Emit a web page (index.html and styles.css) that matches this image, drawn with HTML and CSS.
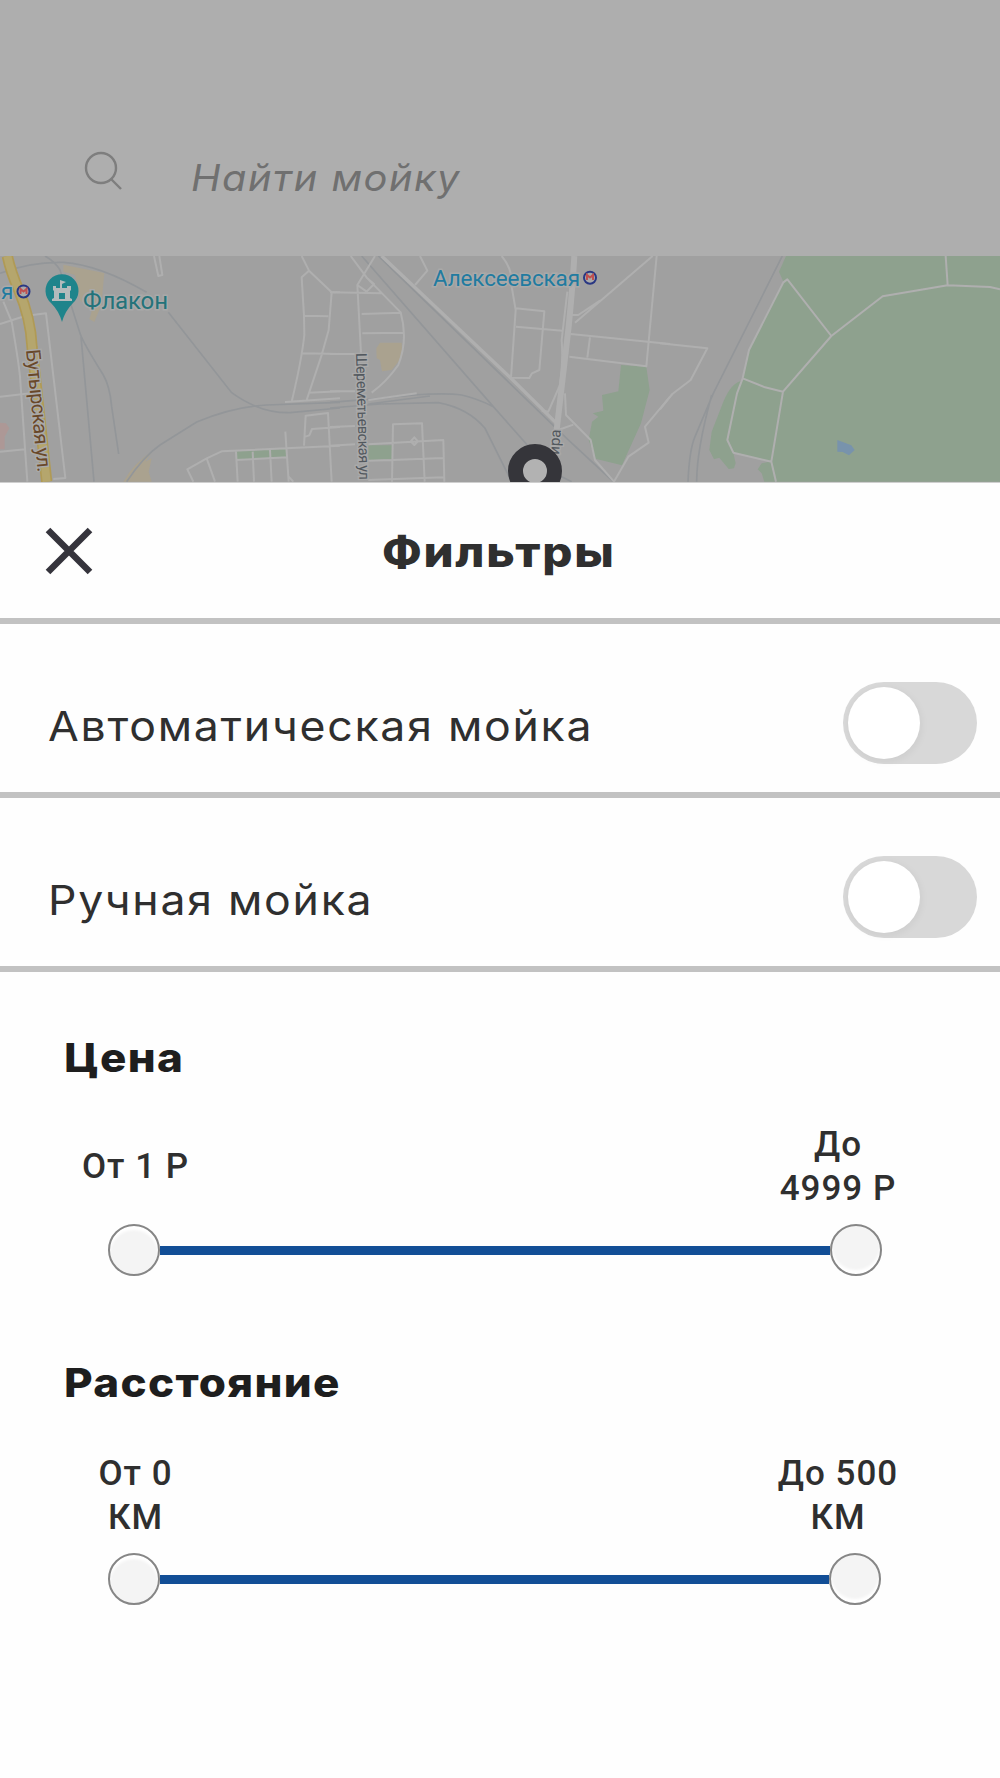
FILE: index.html
```html
<!DOCTYPE html>
<html lang="ru">
<head>
    <meta charset="UTF-8">
    <meta name="viewport" content="width=device-width, initial-scale=1.0">
    <title>Фильтры</title>
    <link rel="stylesheet" href="styles.css">
</head>

<body>
    <!-- Поиск -->
    <div class="search">
        <svg class="search-icon" width="40" height="40" viewBox="0 0 40 40">
            <circle cx="17" cy="17" r="15" />
            <path d="M27 28l10 10" />
        </svg>
        <span class="search-text">Найти мойку</span>
    </div>

    <!-- Карта -->
    <svg class="map" width="1000" height="226" viewBox="0 6 1000 226">
        <!-- левая часть -->
        <g transform="scale(.33333)">
            <path class="sand" d="M190 44L313 69L304 165L283 216L268 207L275 185L240 150L225 75L190 65Z" />
            <path class="sand" d="M370 695Q400 640 458 602L436 635L455 625L446 665L455 695Z" />
            <path class="clinic" d="M0 518L18 520L28 535L14 560L14 598L0 598Z" />
            <path class="park" d="M709 604L858 597V620L709 630Z" />
            <path class="rail" d="M0 70Q90 35 190 37Q300 45 440 127M135 18Q165 35 180 60L240 250Q250 280 310 375Q330 410 335 470L356 612M243 260L282 695M505 187L695 428Q780 490 870 488L1020 474M380 695Q430 620 480 585L590 516Q700 470 800 465L1020 457" />
            <path class="road" d="M10 155L35 215Q55 330 60 380L82 695M0 222L75 198L138 190L196 684L160 687M0 440L92 430M0 605L76 598M462 18L475 78L487 75L478 18M905 18L927 62L995 127H1020M927 62L905 82L912 197L985 199M912 197L913 255Q905 330 875 455M995 127L986 240L965 315L920 450M907 310L1020 312M925 428L1020 424M855 456L1020 445M912 587L917 497L984 489L995 695M916 560L928 556L936 537L1020 531M1020 587L665 604L620 625L562 658L580 695M620 625L645 695M708 605L713 695M758 605L762 695M708 630L862 622M810 600L815 695M856 545L866 695M866 680L880 695" />
            <path class="highway-edge" d="M22 18Q32 65 56 120Q92 205 96 290L140 695" />
            <path class="highway" d="M22 18Q32 65 56 120Q92 205 96 290L140 695" />
        </g>

        <!-- центр -->
        <g transform="translate(330) scale(.33333)">
            <path class="sand" d="M150 278H215L217 320L185 360L156 364L150 330L140 325L139 295Z" />
            <path class="park" d="M115 586H187V627L115 631Z" />
            <path class="park" d="M873 345L949 350L959 420L933 520L876 646L796 626L776 570L786 515L805 500L788 490L820 482L816 435L865 424Z" />
            <path class="rail" d="M95 18L490 470L645 645M145 18L710 565L850 695M0 457L150 445Q320 425 395 435Q440 445 490 470M0 474L150 462L325 458Q415 475 465 535L545 695M115 462L300 438M695 680L725 695" />
            <path class="road" d="M62 18L112 85L212 187Q235 270 205 345Q170 395 125 428M135 18L82 105L93 310M112 85L132 102L110 125L82 105M0 127L155 130M95 192L212 188M97 250L220 248M0 312H93M0 424H75M115 450L260 430M255 105L292 62L270 18M515 18Q550 60 545 110L557 180L543 383L598 384L606 370L628 360L643 184L557 175M558 230L697 242M1020 282L722 252M780 262L772 323M718 320L949 349L980 18M968 18L735 218M810 152L745 195H725M635 482L655 485L690 405Q700 340 695 270L712 125M640 482L675 515M705 430L708 495L782 570L795 630L852 695L895 620L956 578L945 530L1020 440M685 540L730 524M0 531L75 528M0 587L75 583M115 583L340 570L343 695M186 695L189 523L276 520L284 695M186 630L340 624M115 632L186 630M115 690L340 682M242 574L253 562L264 574L253 585Z" />
            <path class="road wide" d="M155 18L540 382L680 520" />
            <path class="road avenue" d="M733 18Q728 110 716 230L680 540" />
        </g>

        <!-- правая часть -->
        <g transform="translate(660) scale(.33333)">
            <path class="park" d="M378 18H1020V695H313L305 670L293 658L305 640L334 634L220 608L227 640L222 655L206 657L178 623L162 628L148 600L155 545L190 455Q215 395 248 392L267 300L370 95L357 65Z" />
            <path class="pond" d="M532 570L574 586L584 600L567 616L548 606L532 605Z" />
            <path class="rail" d="M367 18L160 430L105 560Q88 600 84 695M155 435Q110 600 110 695" />
            <path class="road" d="M0 280L142 295L92 390L37 432L0 478" />
            <path class="road" d="M348 695L334 635L220 608L202 570L231 430L248 385L267 300L370 97L382 88L514 258L668 139L863 106L990 111L1020 118M857 18L863 106M514 258L369 425L334 635M250 386L315 412L369 425" />
        </g>

        <!-- подписи и метки -->
        <g class="metro">
            <circle cx="23.5" cy="41.5" r="6" />
            <path d="M20.500 44v-5l3 2.500 3-2.500v5" />
            <circle cx="590" cy="27.700" r="6" />
            <path d="M587 30v-5l3 2.500 3-2.500v5" />
        </g>
        <text class="label station" x="1" y="49">я</text>
        <text class="label station" x="433" y="35.500" textLength="147">Алексеевская</text>
        <path class="place" d="M62 72Q59 61 51 53A16.500 16.500 0 1 1 73 53Q65 61 62 72Z" />
        <path class="castle" d="M52 51V49L54 48V41L53 40V36H56V38H60V30L66 32L62 34V38H67V36H71V40L70 41V48L72 49V51Z" />
        <rect class="castle-door" x="59" y="43" width="6" height="6" />
        <text class="label venue" x="83" y="58.500" textLength="85">Флакон</text>
        <text class="label street" transform="translate(26 100) rotate(84.500)" textLength="123">Бутырская ул.</text>
        <text class="label lane" transform="translate(356 103) rotate(88.500)" textLength="127">Шереметьевская ул</text>
        <text class="label lane" transform="translate(559 205) rotate(-86)">ира</text>
        <circle class="pin" cx="535" cy="221" r="19.500" />
    </svg>

    <!-- Панель фильтров -->
    <div class="sheet">
        <div class="sheet-header">
            <svg class="close" width="50" height="50" viewBox="0 0 50 50">
                <path d="M4 4L46 46M46 4L4 46" />
            </svg>
            <h1 class="title">Фильтры</h1>
        </div>

        <div class="option">
            <span class="option-name">Автоматическая мойка</span>
            <span class="toggle"></span>
        </div>
        <div class="option">
            <span class="option-name">Ручная мойка</span>
            <span class="toggle"></span>
        </div>

        <div class="range price">
            <h2 class="range-title">Цена</h2>
            <div class="range-labels">
                <span class="from">От 1 Р</span>
                <span class="to">До<br>4999 Р</span>
            </div>
            <div class="slider">
                <span class="thumb"></span>
                <span class="track"></span>
                <span class="thumb"></span>
            </div>
        </div>

        <div class="range distance">
            <h2 class="range-title">Расстояние</h2>
            <div class="range-labels">
                <span class="from">От 0<br>КМ</span>
                <span class="to">До 500<br>КМ</span>
            </div>
            <div class="slider">
                <span class="thumb"></span>
                <span class="track"></span>
                <span class="thumb"></span>
            </div>
        </div>
    </div>
</body>
</html>
```
FILE: styles.css
```css
* {
    box-sizing: border-box;
}

body {
    margin: 0;
    width: 1000px;
    height: 1778px;
    background: #fefefe;
    color: #2f2f2f;
    font-family: Inter, "Open Sans", sans-serif;
    overflow: hidden;
}

/* Поиск */
.search {
    display: flex;
    align-items: flex-start;
    height: 256px;
    padding: 151px 0 0 84px;
    background: #aeaeae;
}

.search-icon {
    fill: none;
    stroke: #7e7e7e;
    stroke-width: 2.4;
}

.search-text {
    margin: 4px 0 0 67px;
    color: #707070;
    font-size: 37px;
    font-style: italic;
    line-height: 46px;
    letter-spacing: 1.4px;
    transform: scaleX(1.075);
    transform-origin: left;
}

/* Карта */
.map {
    display: block;
    background: #a0a0a0;
}

.road {
    fill: none;
    stroke: #afafaf;
    stroke-width: 6;
    stroke-linejoin: round;
}

.road.wide {
    stroke-width: 10;
}

.road.avenue {
    stroke-width: 18;
}

.rail {
    fill: none;
    stroke: #939699;
    stroke-width: 5;
}

.highway-edge,
.highway {
    fill: none;
    stroke: #b09a55;
    stroke-width: 34;
}

.highway {
    stroke: #b5a66d;
    stroke-width: 24;
}

.park {
    fill: #8ea18e;
}

.sand {
    fill: #aaa28f;
}

.clinic {
    fill: #ad9896;
}

.pond {
    fill: #7893ac;
}

.label {
    font-family: Roboto, sans-serif;
    paint-order: stroke;
    stroke: #a9a9a9;
    stroke-width: 3px;
}

.station {
    fill: #217ba0;
    font-size: 22.5px;
}

.venue {
    fill: #24737a;
    font-size: 24px;
}

.street {
    fill: #694829;
    font-size: 20px;
}

.lane {
    fill: #52585e;
    font-size: 15px;
}

.metro {
    fill: #aaa;
    stroke: #293783;
    stroke-width: 2;
}

.metro path {
    fill: none;
    stroke: #c05050;
}

.place {
    fill: #1f848b;
}

.castle {
    fill: #b4bbbc;
}

.castle-door {
    fill: #1f848b;
}

.pin {
    fill: #b2b2b2;
    stroke: #35353a;
    stroke-width: 15;
}

/* Панель фильтров */
.sheet-header {
    display: grid;
    grid-template-columns: 90px 1fr 90px;
    align-items: center;
    height: 142px;
    padding: 0 0 0 44px;
    border-top: 1px solid #cfcfcf;
    border-bottom: 6px solid #c2c2c2;
}

.close {
    fill: none;
    stroke: #35343c;
    stroke-width: 6.5;
}

.title {
    margin: 2px 0 0;
    padding-left: 248px;
    font-size: 42px;
    font-weight: 800;
    line-height: 50px;
    letter-spacing: 1.5px;
    transform: scaleX(1.13);
    transform-origin: 248px center;
}

.option {
    display: flex;
    justify-content: space-between;
    height: 174px;
    padding: 58px 23px 0 48px;
    border-bottom: 6px solid #c2c2c2;
}

.option-name {
    margin-top: 19px;
    font-size: 41px;
    line-height: 50px;
    letter-spacing: 1.6px;
    transform: scaleX(1.088);
    transform-origin: left;
}

.toggle {
    width: 134px;
    height: 82px;
    padding: 5px;
    border-radius: 41px;
    background: #d8d8d8;
}

.toggle::before {
    content: "";
    display: block;
    width: 72px;
    height: 72px;
    border-radius: 50%;
    background: #fff;
    box-shadow: 1px 2px 8px rgba(0, 0, 0, 0.06);
}

.range {
    padding: 61px 100px 0 63px;
}

.distance {
    padding-top: 82px;
}

.range-title {
    margin: 0 0 0 1px;
    height: 50px;
    color: #1e1e1e;
    font-size: 40px;
    font-weight: 800;
    line-height: 50px;
    letter-spacing: 1.2px;
    transform: scaleX(1.1);
    transform-origin: left;
}

.range-labels {
    display: flex;
    align-items: center;
    justify-content: space-between;
    height: 88px;
    margin-top: 40px;
    font-family: Roboto, sans-serif;
    font-size: 35px;
    font-weight: 500;
    line-height: 44px;
    letter-spacing: 1px;
    text-align: center;
}

.distance .range-labels {
    margin-top: 44px;
}

.from {
    width: 145px;
}

.to {
    width: 124px;
}

.slider {
    display: flex;
    align-items: center;
    width: 774px;
    margin: 13px 0 0 45px;
}

.distance .slider {
    width: 773px;
}

.thumb {
    width: 52px;
    height: 52px;
    border: 2px solid #868686;
    border-radius: 50%;
    background: #f4f4f4;
    box-shadow: inset 0 4px 3px #fff;
}

.thumb:last-child {
    box-shadow: inset 0 -4px 3px #fff;
}

.track {
    flex: 1;
    height: 9px;
    background: #124e96;
}
```
